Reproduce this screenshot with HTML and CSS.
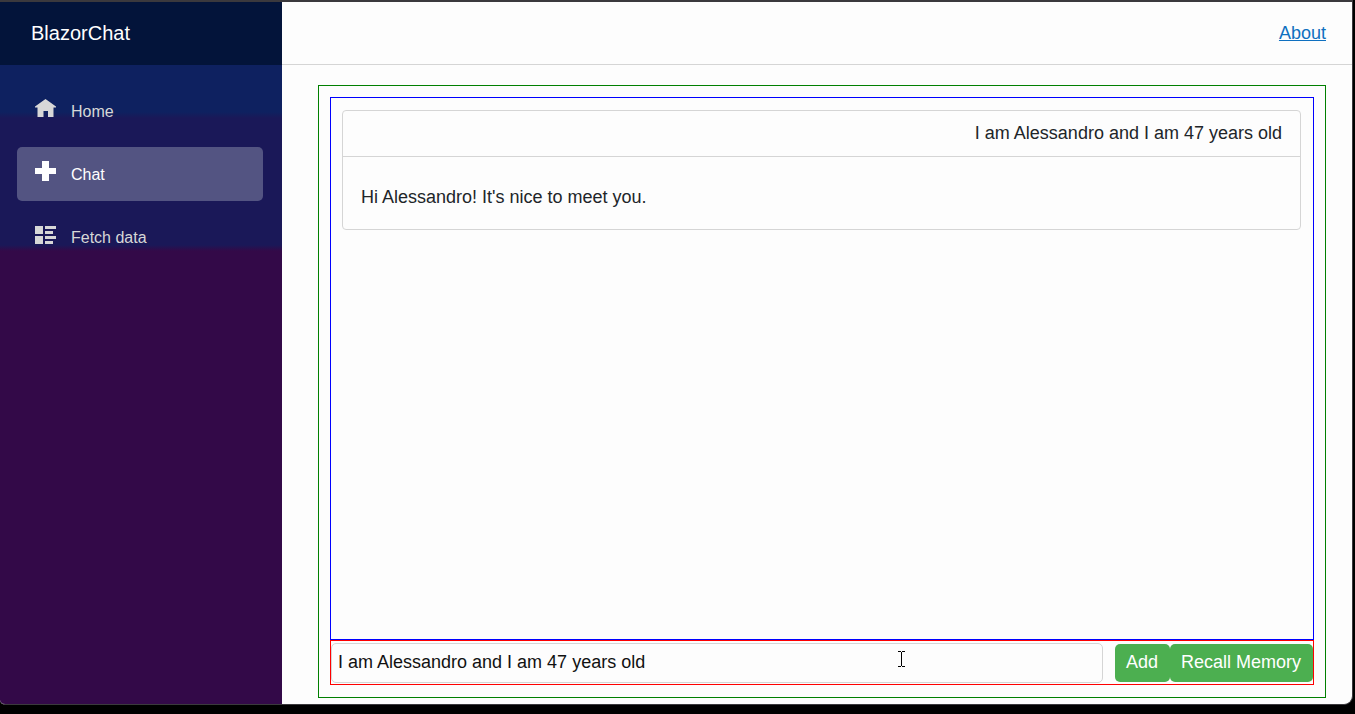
FILE: index.html
```html
<!DOCTYPE html>
<html lang="en">
<head>
  <meta charset="utf-8">
  <title>BlazorChat</title>
  <link rel="stylesheet" href="styles.css">
</head>
<body>
  <div class="page">
    <div class="sidebar">
      <header class="brand-row"><a class="brand" href="#">BlazorChat</a></header>
      <nav class="nav">
        <a class="nav-link" href="#">
          <svg class="nav-icon" viewBox="0 0 22 22" aria-hidden="true"><path d="M11.500 1L22 8.500V9.500H19.500V19H14V13H9.500V19H3.500V9.500H1V8.500Z"/></svg>
          <span>Home</span>
        </a>
        <a class="nav-link active" href="#" aria-current="page">
          <svg class="nav-icon" viewBox="0 0 22 22" aria-hidden="true"><path d="M8 0h7v7h7v6h-7v7H8v-7H1V7h7Z"/></svg>
          <span>Chat</span>
        </a>
        <a class="nav-link" href="#">
          <svg class="nav-icon" viewBox="0 0 22 22" aria-hidden="true"><path d="M1 2h8v8H1zM1 12h8v8H1zM11 2h11v3H11zM11 7h8v3h-8zM11 12h11v3H11zM11 17h8v3h-8z"/></svg>
          <span>Fetch data</span>
        </a>
      </nav>
    </div>
    <main class="main">
      <div class="top-row"><a class="about" href="#">About</a></div>
      <article class="content">
        <section class="chat">
          <div class="messages">
            <div class="card">
              <div class="card-header">I am Alessandro and I am 47 years old</div>
              <div class="card-body">Hi Alessandro! It's nice to meet you.</div>
            </div>
          </div>
          <form class="composer">
            <input class="prompt" type="text" aria-label="Message" value="I am Alessandro and I am 47 years old">
            <div class="actions">
              <button class="btn" type="button">Add</button>
              <button class="btn" type="button">Recall Memory</button>
            </div>
          </form>
        </section>
      </article>
    </main>
  </div>
  <svg class="cursor" viewBox="0 0 7 16" aria-hidden="true"><path d="M0 0h3v1h1V0h3v1H4v14h3v1H4v-1H3v1H0v-1h3V1H0Z"/></svg>
</body>
</html>
```
FILE: styles.css
```css
* {
  box-sizing: border-box;
}

body {
  margin: 0;
  height: 100vh;
  padding: 0 2px 9px 0;
  background: #000;
  color: #212529;
  font: 18px/27px "Liberation Sans", Arial, sans-serif;
}

.page {
  display: flex;
  height: 100%;
  overflow: hidden;
  border: solid #3b393d;
  border-width: 2px 1px 1px 0;
  border-radius: 0 0 9px 5px;
  background: #fdfdfd;
}

.sidebar {
  flex: 0 0 282px;
  background: linear-gradient(#0e2160 110px, #1a1858 116px, #1a1858 243px, #330948 249px);
}

.brand-row {
  display: flex;
  align-items: center;
  height: 63px;
  padding: 0 31px;
  background: #03143a;
}

.brand {
  color: #fff;
  font-size: 20px;
  text-decoration: none;
}

.nav {
  display: flex;
  flex-direction: column;
  gap: 9px;
  padding: 19px 19px 0 17px;
}

.nav-link {
  display: flex;
  align-items: center;
  gap: 15px;
  height: 54px;
  padding: 0 17px;
  border-radius: 5px;
  color: #d7d7d7;
  font-size: 16px;
  text-decoration: none;
}

.nav-link.active {
  background: #535482;
  color: #fff;
}

.nav-icon {
  width: 22px;
  height: 22px;
  margin-bottom: 4px;
  fill: currentColor;
}

.main {
  display: flex;
  flex: 1;
  flex-direction: column;
  min-width: 0;
}

.top-row {
  display: flex;
  align-items: center;
  justify-content: flex-end;
  height: 63px;
  padding: 0 26px;
  border-bottom: 1px solid #d5d5d5;
}

.about {
  color: #0f70c0;
}

.content {
  display: flex;
  flex: 1;
  min-height: 0;
  padding: 20px 26px 6px 36px;
}

.chat {
  display: flex;
  flex: 1;
  flex-direction: column;
  min-width: 0;
  padding: 11px 11px 12px;
  border: 1px solid green;
}

.messages {
  flex: 1;
  padding: 12px 12px 12px 11px;
  border: 1px solid #00f;
}

.card {
  border: 1px solid #d5d5d5;
  border-radius: 4px;
}

.card-header {
  padding: 9px 18px;
  border-bottom: 1px solid #d5d5d5;
  text-align: right;
}

.card-body {
  padding: 27px 18px 18px;
}

.composer {
  display: flex;
  align-items: center;
  gap: 12px;
  height: 45px;
  border: 1px solid #f00;
}

.prompt {
  flex: 1;
  min-width: 0;
  height: 40px;
  padding: 0 6px;
  border: 1px solid #d5d5d5;
  border-radius: 5px;
  background: #fdfdfd;
  color: #111;
  font: inherit;
}

.actions {
  display: flex;
}

.btn {
  height: 38px;
  padding: 0 12px 0 11px;
  border: 0;
  border-radius: 5px;
  background: #4caf50;
  color: #fff;
  font: inherit;
}

.cursor {
  position: absolute;
  top: 651px;
  left: 898px;
  width: 7px;
  height: 16px;
  pointer-events: none;
}
```
